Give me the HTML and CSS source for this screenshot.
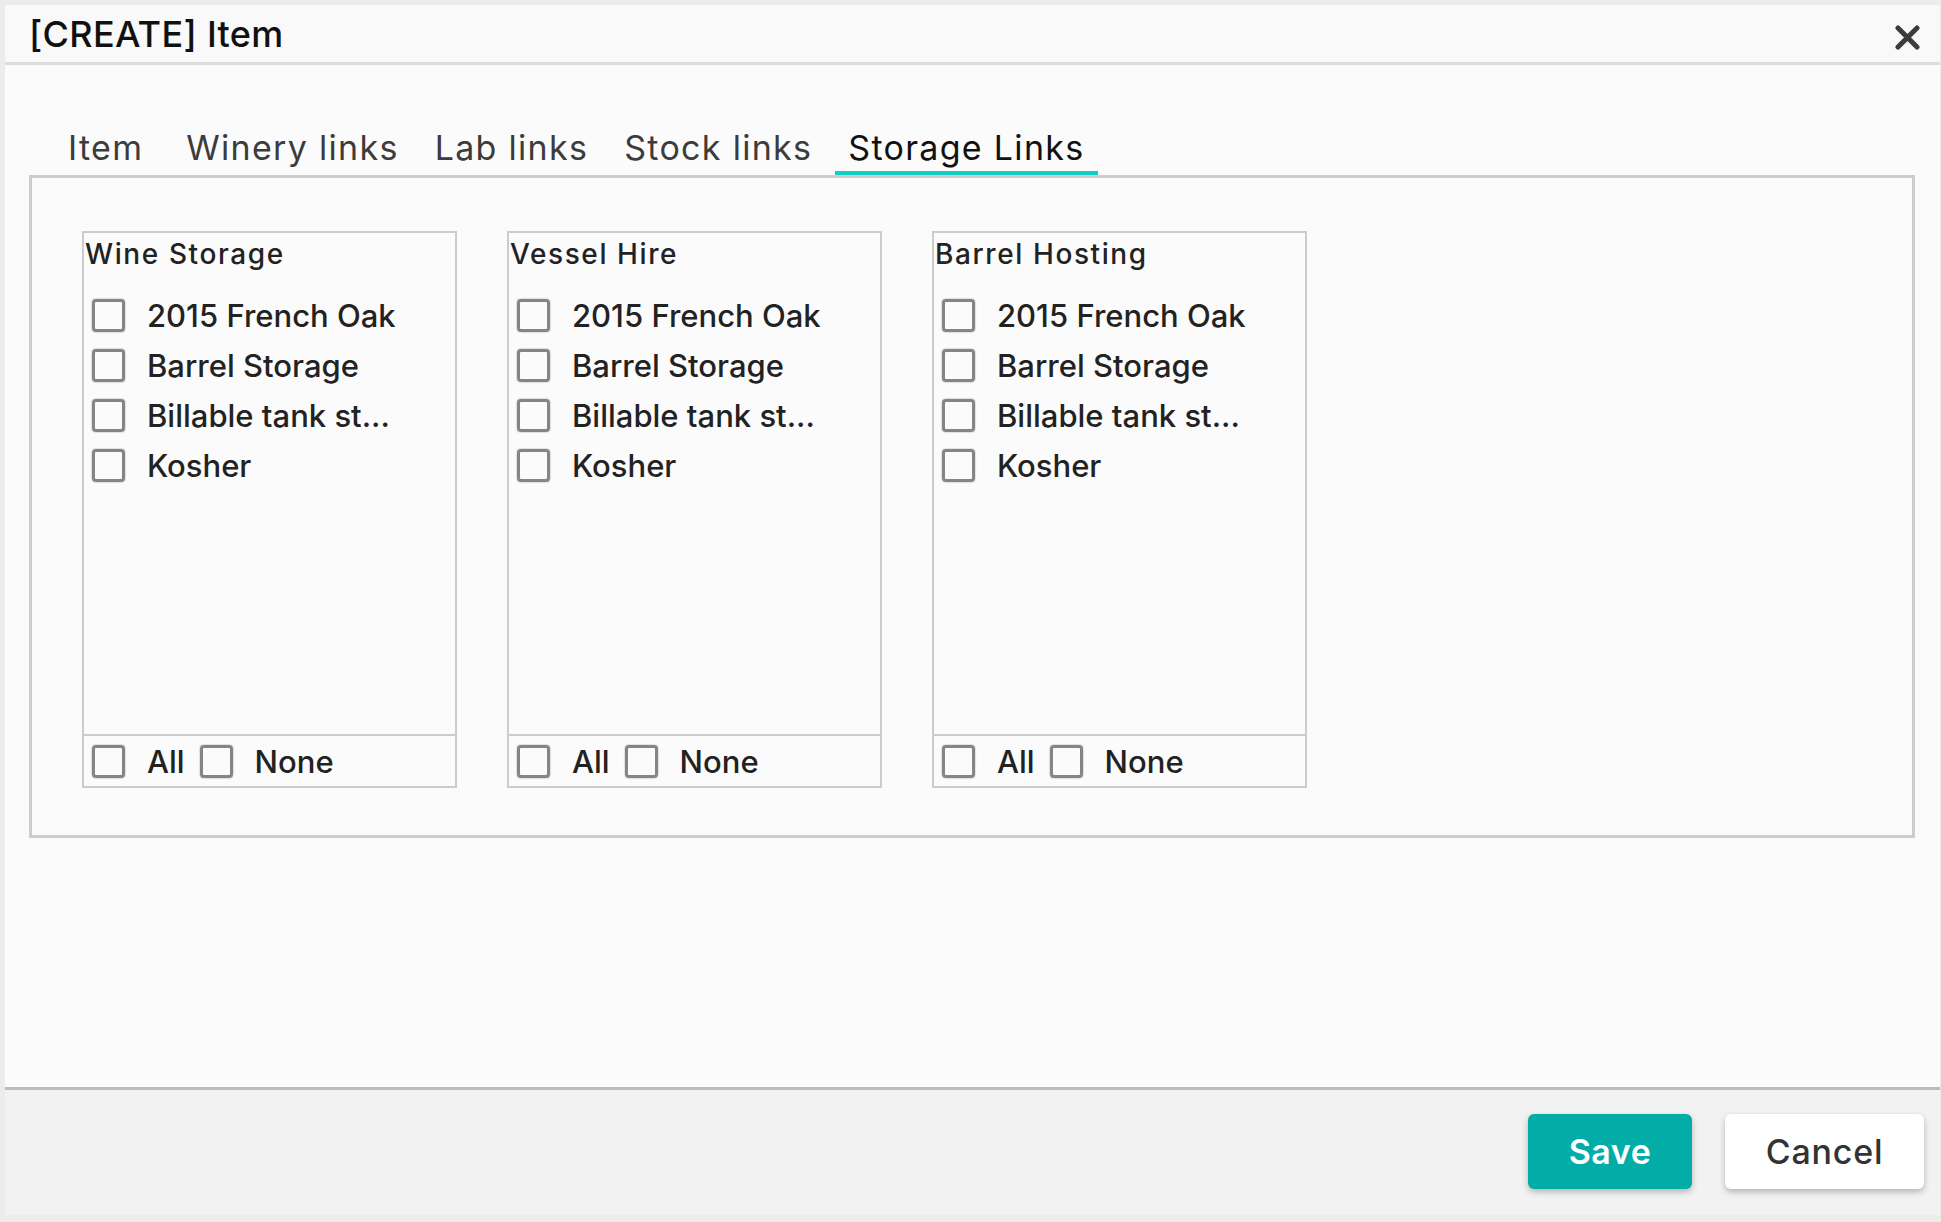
FILE: index.html
```html
<!DOCTYPE html>
<html lang="en">
<head>
  <meta charset="UTF-8" />
  <meta name="viewport" content="width=device-width, initial-scale=1" />
  <title>[CREATE] Item</title>
  <link rel="stylesheet" href="styles.css">
</head>
<body>
  <div class="dialog">
    <div class="dialog-header">
      <h1 class="dialog-title">[CREATE] Item</h1>
      <button class="close-btn" title="Close">
        <svg width="25" height="25" viewBox="0 0 25 25">
          <path d="M3 3 L22 22 M22 3 L3 22" stroke="#3c3c3c" stroke-width="5" stroke-linecap="round" fill="none"/>
        </svg>
      </button>
    </div>

    <div class="dialog-body">
      <ul class="tabs">
        <li class="tab">Item</li>
        <li class="tab">Winery links</li>
        <li class="tab">Lab links</li>
        <li class="tab">Stock links</li>
        <li class="tab active">Storage Links</li>
      </ul>

      <div class="tab-panel">
        <div class="link-box">
          <div class="link-box-title">Wine Storage</div>
          <ul class="link-list">
            <li><span class="check"></span>2015 French Oak</li>
            <li><span class="check"></span>Barrel Storage</li>
            <li><span class="check"></span>Billable tank st...</li>
            <li><span class="check"></span>Kosher</li>
          </ul>
          <div class="link-box-footer">
            <span class="check"></span><span class="pick">All</span>
            <span class="check"></span><span class="pick">None</span>
          </div>
        </div>

        <div class="link-box">
          <div class="link-box-title">Vessel Hire</div>
          <ul class="link-list">
            <li><span class="check"></span>2015 French Oak</li>
            <li><span class="check"></span>Barrel Storage</li>
            <li><span class="check"></span>Billable tank st...</li>
            <li><span class="check"></span>Kosher</li>
          </ul>
          <div class="link-box-footer">
            <span class="check"></span><span class="pick">All</span>
            <span class="check"></span><span class="pick">None</span>
          </div>
        </div>

        <div class="link-box">
          <div class="link-box-title">Barrel Hosting</div>
          <ul class="link-list">
            <li><span class="check"></span>2015 French Oak</li>
            <li><span class="check"></span>Barrel Storage</li>
            <li><span class="check"></span>Billable tank st...</li>
            <li><span class="check"></span>Kosher</li>
          </ul>
          <div class="link-box-footer">
            <span class="check"></span><span class="pick">All</span>
            <span class="check"></span><span class="pick">None</span>
          </div>
        </div>
      </div>
    </div>

    <div class="dialog-footer">
      <button class="btn btn-save">Save</button>
      <button class="btn btn-cancel">Cancel</button>
    </div>
  </div>
</body>
</html>
```

FILE: styles.css
```css
body {
  margin: 0;
  background: #ececec;
  font-family: Inter, "Open Sans", sans-serif;
  color: #222;
}

.dialog {
  margin: 5px 1px 0 5px;
  height: 1210px;
  display: flex;
  flex-direction: column;
  background: #fbfbfb;
}

/* header */
.dialog-header {
  height: 57px;
  border-bottom: 3px solid #dcdcdc;
  background: #f9f9f9;
  display: flex;
  justify-content: space-between;
  align-items: center;
  padding-left: 24px;
}
.dialog-title {
  margin: 0;
  font-size: 36px;
  font-weight: 500;
  letter-spacing: 0.3px;
  color: #111;
}
.close-btn {
  border: none;
  background: none;
  padding: 0;
  margin: 8px 20px 0 0;
  width: 25px;
  height: 25px;
  cursor: pointer;
}

/* body + tabs */
.dialog-body {
  flex: 1;
  padding: 66px 25px 0 24px;
}
.tabs {
  list-style: none;
  margin: 0;
  padding: 0 0 0 26px;
  display: flex;
  gap: 10px;
}
.tab {
  padding: 0 13px 6px;
  line-height: 34px;
  font-size: 34px;
  letter-spacing: 1.3px;
  color: #3c3c3c;
  border-bottom: 4px solid transparent;
  cursor: pointer;
}
.tab:first-child {
  padding-right: 20px;
}
.tab.active {
  color: #111;
  border-bottom-color: #12cfc6;
}

.tab-panel {
  height: 557px;
  border: 3px solid #cdcdcd;
  padding: 53px 50px 47px 50px;
  display: flex;
  gap: 50px;
}

/* storage link boxes */
.link-box {
  width: 371px;
  border: 2px solid #cccccc;
  display: flex;
  flex-direction: column;
}
.link-box-title {
  padding: 1px 2px 1px 1px;
  line-height: 40px;
  font-size: 28px;
  font-weight: 500;
  letter-spacing: 1.6px;
  color: #222;
}
.link-list {
  list-style: none;
  margin: 0;
  padding: 15px 0 0 8px;
  flex: 1;
}
.link-list li {
  height: 50px;
  display: flex;
  align-items: center;
  font-size: 31px;
  font-weight: 500;
  color: #222;
}
.check {
  width: 27px;
  height: 27px;
  border: 3px solid #858585;
  border-radius: 4px;
  box-shadow: 0 0 1.5px rgba(0, 0, 0, 0.5);
  margin-right: 22px;
  flex-shrink: 0;
  display: inline-block;
}
.link-box-footer {
  height: 50px;
  border-top: 2px solid #cccccc;
  padding-left: 8px;
  display: flex;
  align-items: center;
  font-size: 31px;
  font-weight: 500;
  color: #222;
}
.pick {
  margin-right: 15px;
}

/* footer buttons */
.dialog-footer {
  height: 128px;
  box-sizing: border-box;
  border-top: 3px solid #bcbcbc;
  background: #f2f2f2;
  display: flex;
  justify-content: flex-end;
  align-items: flex-start;
  gap: 33px;
  padding: 24px 16px 0 0;
}
.btn {
  height: 75px;
  border: none;
  border-radius: 6px;
  font-family: Inter, "Open Sans", sans-serif;
  font-size: 34px;
  box-shadow: 0 3px 6px rgba(0, 0, 0, 0.25);
  cursor: pointer;
}
.btn-save {
  width: 164px;
  background: #02aca7;
  color: white;
  font-weight: 600;
  letter-spacing: 0.5px;
}
.btn-cancel {
  width: 199px;
  background: white;
  color: #333;
  font-weight: 500;
  letter-spacing: 0.8px;
}
```
